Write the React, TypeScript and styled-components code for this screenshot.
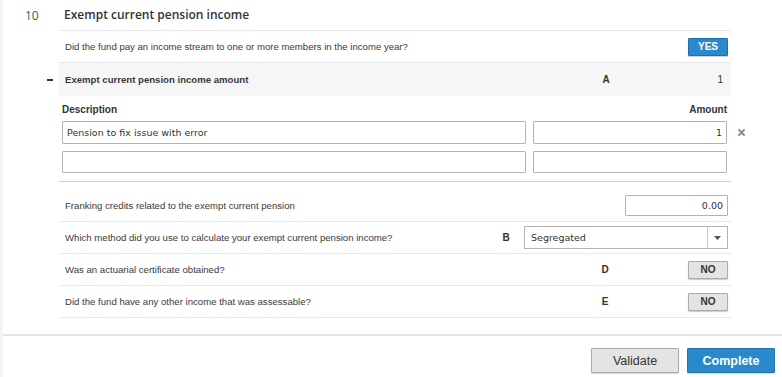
import React from 'react';
import styled, { createGlobalStyle } from 'styled-components';

const GlobalStyle = createGlobalStyle`
  html, body {
    margin: 0;
    padding: 0;
    background: #ffffff;
  }
  body {
    font-family: "Liberation Sans", Arial, sans-serif;
    color: #333333;
  }
`;

const Page = styled.div`
  width: 779px;
  height: 377px;
  border-left: 3px solid #f1f2f5;
  background: #ffffff;
  display: flex;
  flex-direction: column;
`;

const Section = styled.div`
  display: flex;
  flex-direction: column;
  padding-right: 51px;
`;

const Row = styled.div`
  display: flex;
  align-items: stretch;
`;

const Gutter = styled.div`
  width: 56px;
  flex-shrink: 0;
  display: flex;
  align-items: center;
`;

const Number = styled.span`
  padding-left: 22px;
  font-family: "Open Sans", sans-serif;
  font-size: 12px;
  color: #555555;
`;

const Minus = styled.span`
  margin-left: 44px;
  width: 6px;
  height: 2px;
  background: #333333;
`;

const Body = styled.div<{ $height?: number; $shaded?: boolean; $border?: string }>`
  flex: 1;
  display: flex;
  align-items: center;
  height: ${p => p.$height ?? 31}px;
  border-bottom: 1px solid ${p => p.$border ?? '#e9e9e9'};
  background: ${p => (p.$shaded ? '#f6f6f6' : 'transparent')};
  padding: 0 3px 0 6px;
`;

const Title = styled.h2`
  margin: -2px 0 0 -1px;
  font-family: "Open Sans", sans-serif;
  font-weight: 600;
  font-size: 12px;
  color: #333333;
`;

const Question = styled.span<{ $bold?: boolean }>`
  flex: 1;
  font-size: 9.6px;
  font-weight: ${p => (p.$bold ? 700 : 400)};
  color: #3a3a3a;
`;

const Code = styled.span<{ $right: number }>`
  width: 10px;
  text-align: center;
  font-size: 10px;
  font-weight: 700;
  color: #333333;
  margin-right: ${p => p.$right}px;
`;

const Value = styled.span`
  width: 30px;
  text-align: right;
  font-size: 10px;
  padding-right: 5px;
`;

const Toggle = styled.button<{ $on?: boolean }>`
  width: 40px;
  height: 18px;
  padding: 0;
  font-family: "Liberation Sans", Arial, sans-serif;
  font-size: 10px;
  font-weight: 700;
  color: ${p => (p.$on ? '#ffffff' : '#333333')};
  background: ${p => (p.$on ? '#2a89cb' : '#e4e4e4')};
  border: 1px solid ${p => (p.$on ? '#1f6fa6' : '#a9a9a9')};
  border-radius: 1px;
  box-shadow: 0 1px 1px rgba(0, 0, 0, 0.2);
`;

const Table = styled.div`
  display: flex;
  flex-direction: column;
  padding: 7px 0 8px 3px;
  gap: 7px;
`;

const TableHead = styled.div`
  display: flex;
  justify-content: space-between;
  width: 665px;
  font-size: 10px;
  font-weight: 700;
  line-height: 14px;
  color: #333333;
  margin-bottom: -3px;
`;

const EntryRow = styled.div`
  display: flex;
  align-items: center;
  gap: 7px;
`;

const TextBox = styled.div<{ $width: number; $height?: number }>`
  box-sizing: border-box;
  width: ${p => p.$width}px;
  height: ${p => p.$height ?? 23}px;
  border: 1px solid #b3b3b3;
  border-radius: 1px;
  background: #ffffff;
  display: flex;
  align-items: center;
  padding: 0 4px;
  font-family: "DejaVu Sans", Verdana, sans-serif;
  font-size: 9.5px;
  color: #333333;
`;

const NumberBox = styled(TextBox)`
  justify-content: flex-end;
`;

const Remove = styled.span`
  margin-left: 4px;
  display: flex;
  align-items: center;
`;

const Divider = styled.div`
  margin: 0 51px 8px 56px;
  border-bottom: 1px solid #cfcfcf;
`;

const Select = styled.div`
  box-sizing: border-box;
  width: 204px;
  height: 23px;
  border: 1px solid #b3b3b3;
  display: flex;
  align-items: stretch;
  font-family: "DejaVu Sans", Verdana, sans-serif;
  font-size: 9.5px;
  color: #333333;
`;

const SelectValue = styled.span`
  flex: 1;
  display: flex;
  align-items: center;
  padding-left: 6px;
  border-right: 1px solid #c6c6c6;
`;

const SelectCaret = styled.span`
  width: 19px;
  display: flex;
  align-items: center;
  justify-content: center;
`;

const Footer = styled.div`
  margin-top: 16px;
  border-top: 2px solid #e3e3e3;
  display: flex;
  justify-content: flex-end;
  gap: 8px;
  padding: 12px 7px 0 0;
`;

const ActionButton = styled.button<{ $primary?: boolean }>`
  width: 88px;
  height: 25px;
  font-family: "Liberation Sans", Arial, sans-serif;
  font-size: 12.5px;
  font-weight: ${p => (p.$primary ? 700 : 400)};
  color: ${p => (p.$primary ? '#ffffff' : '#333333')};
  background: ${p => (p.$primary ? '#2a89cb' : '#e4e4e4')};
  border: 1px solid ${p => (p.$primary ? '#2277b3' : '#aaaaaa')};
  border-radius: 1px;
  box-shadow: 0 1px 1px rgba(0, 0, 0, 0.15);
`;

const CloseIcon = () => (
  <svg width="7" height="7" viewBox="0 0 7 7">
    <path d="M1 1 L6 6 M6 1 L1 6" stroke="#8a8a8a" strokeWidth="1.8" strokeLinecap="round" />
  </svg>
);

const CaretIcon = () => (
  <svg width="7" height="4" viewBox="0 0 7 4">
    <path d="M0 0 H7 L3.5 4 Z" fill="#555555" />
  </svg>
);

export default function App() {
  return (
    <>
      <GlobalStyle />
      <Page>
        <Section>
          <Row>
            <Gutter><Number>10</Number></Gutter>
            <Body $height={30}><Title>Exempt current pension income</Title></Body>
          </Row>
          <Row>
            <Gutter />
            <Body>
              <Question>Did the fund pay an income stream to one or more members in the income year?</Question>
              <Toggle $on>YES</Toggle>
            </Body>
          </Row>
          <Row>
            <Gutter><Minus /></Gutter>
            <Body $height={32} $shaded $border="transparent">
              <Question $bold>Exempt current pension income amount</Question>
              <Code $right={82}>A</Code>
              <Value>1</Value>
            </Body>
          </Row>
          <Row>
            <Gutter />
            <Table>
              <TableHead><span>Description</span><span>Amount</span></TableHead>
              <EntryRow>
                <TextBox $width={464}>Pension to fix issue with error</TextBox>
                <NumberBox $width={194}>1</NumberBox>
                <Remove><CloseIcon /></Remove>
              </EntryRow>
              <EntryRow>
                <TextBox $width={464} $height={22} />
                <NumberBox $width={194} $height={22} />
              </EntryRow>
            </Table>
          </Row>
        </Section>
        <Divider />
        <Section>
          <Row>
            <Gutter />
            <Body>
              <Question>Franking credits related to the exempt current pension</Question>
              <NumberBox $width={103} $height={21}>0.00</NumberBox>
            </Body>
          </Row>
          <Row>
            <Gutter />
            <Body>
              <Question>Which method did you use to calculate your exempt current pension income?</Question>
              <Code $right={13}>B</Code>
              <Select>
                <SelectValue>Segregated</SelectValue>
                <SelectCaret><CaretIcon /></SelectCaret>
              </Select>
            </Body>
          </Row>
          <Row>
            <Gutter />
            <Body>
              <Question>Was an actuarial certificate obtained?</Question>
              <Code $right={78}>D</Code>
              <Toggle>NO</Toggle>
            </Body>
          </Row>
          <Row>
            <Gutter />
            <Body>
              <Question>Did the fund have any other income that was assessable?</Question>
              <Code $right={78}>E</Code>
              <Toggle>NO</Toggle>
            </Body>
          </Row>
        </Section>
        <Footer>
          <ActionButton>Validate</ActionButton>
          <ActionButton $primary>Complete</ActionButton>
        </Footer>
      </Page>
    </>
  );
}
